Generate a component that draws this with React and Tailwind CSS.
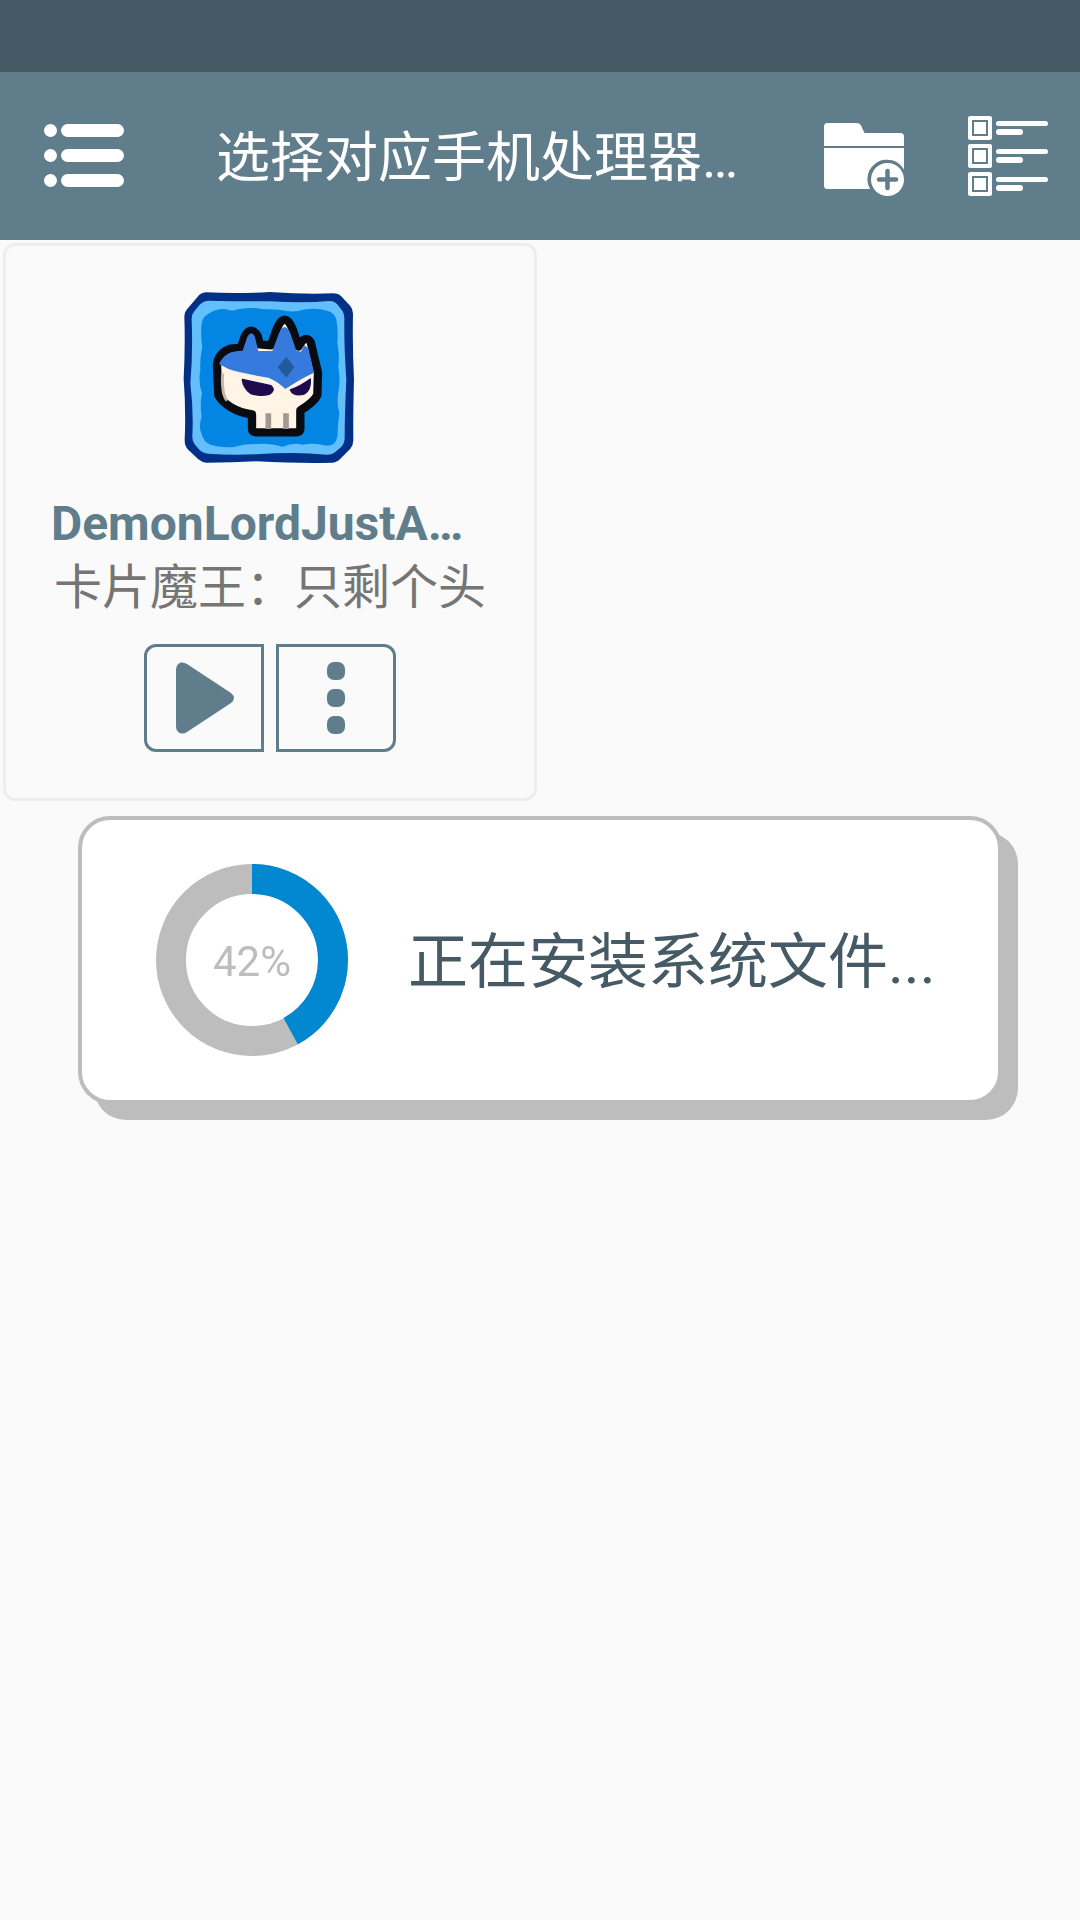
import React from 'react';

const MenuIcon = () => (
  <svg viewBox="0 0 80 80" className="w-20 h-20" fill="currentColor">
    {[8, 33, 58].map((y) => (
      <g key={y}>
        <rect x="0" y={y} width="13" height="13" rx="6.5" />
        <rect x="17" y={y} width="63" height="13" rx="6.5" />
      </g>
    ))}
  </svg>
);

const AddFolderIcon = () => (
  <svg viewBox="0 0 80 80" className="w-20 h-20">
    <path
      fill="currentColor"
      d="M0 30V10.500Q0 7 3.500 7H33Q36 7 37 9.500L40.500 17H76.500Q80 17 80 20.500V30Z"
    />
    <path
      fill="currentColor"
      d="M0 32H80V53.500A19 19 0 0 0 46 73H3.500Q0 73 0 69.500Z"
    />
    <circle cx="63.500" cy="63.500" r="16.500" fill="currentColor" />
    <path
      d="M63.500 55v17M55 63.500h17"
      fill="none"
      stroke="#607d8b"
      strokeWidth="4.500"
      strokeLinecap="round"
    />
  </svg>
);

const ViewListIcon = () => (
  <svg viewBox="0 0 80 80" className="w-20 h-20" fill="currentColor">
    {[0, 28, 56].map((y) => (
      <g key={y}>
        <rect x="0" y={y} width="24" height="24" rx="2" />
        <rect x="5" y={y + 5} width="14" height="14" fill="none" stroke="#607d8b" strokeWidth="2" />
        <rect x="28" y={y + 5} width="52" height="5" rx="2.500" />
        <rect x="28" y={y + 13} width="27" height="6" rx="3" />
      </g>
    ))}
  </svg>
);

const PlayIcon = () => (
  <svg viewBox="0 0 80 80" className="w-20 h-20" fill="currentColor">
    <path d="M12 12Q12 6 17 4.500Q20 4 23 6L67 35Q73 40 67 45L23 74Q20 76 17 75.500Q12 74 12 68Z" />
  </svg>
);

const DotsIcon = () => (
  <svg viewBox="0 0 80 80" className="w-20 h-20" fill="currentColor">
    <rect x="31" y="4" width="18" height="18" rx="7" />
    <rect x="31" y="31" width="18" height="18" rx="7" />
    <rect x="31" y="58" width="18" height="18" rx="7" />
  </svg>
);

// Skull with the blue crown
const AppLogo = () => (
  <svg viewBox="40 33 522 522" className="w-[174px] h-[174px]">
    <path
      fill="#033087"
      d="M108 37Q200 42 300 36Q400 43 490 40Q505 40 516 50L542 78Q551 88 550 105Q548 200 553 300Q550 400 551 480Q551 495 542 506L512 536Q502 547 486 548Q400 551 260 544Q190 548 110 548Q96 547 86 538L54 508Q45 498 45 480Q49 390 42 296Q47 200 44 110Q44 98 52 88L84 50Q94 38 108 37Z"
    />
    <path
      fill="#62bffb"
      d="M115 62Q200 64 300 64Q400 70 480 63Q495 64 504 74L518 92Q525 102 524 120Q523 200 530 300Q525 400 525 475Q524 492 514 502L494 518Q484 525 470 524Q380 515 260 523Q180 526 115 521Q100 520 90 510L76 494Q67 484 68 468Q72 390 62 310Q70 220 66 120Q65 104 74 94L90 74Q100 63 115 62Z"
    />
    <path
      fill="#0386e3"
      d="M122 98Q145 84 170 88Q185 95 205 88Q250 80 280 88Q330 87 350 93Q380 97 400 89Q440 82 472 92Q495 98 500 118Q506 150 503 190Q510 225 506 260Q513 300 506 335Q500 370 509 400Q504 440 503 470Q498 497 470 497Q435 488 400 494Q370 486 340 500Q300 488 260 492Q220 492 190 502Q150 502 124 495Q102 488 95 460Q86 440 96 410Q90 375 97 340Q85 305 92 270Q90 235 98 200Q92 165 96 130Q100 106 122 98Z"
    />
    <path
      fill="#fff4e6"
      stroke="#0a0b10"
      strokeWidth="25"
      strokeLinejoin="round"
      d="M142 255C145 230 160 212 182 206L213 203L226 168Q244 136 264 168L270 193L304 196L320 150Q345 88 370 150L386 200L398 182Q412 170 423 186L445 278L443 345Q434 366 392 391V448Q390 457 380 457H258Q247 457 247 446V403C200 397 160 372 146 345Z"
    />
    <path
      fill="#367ade"
      d="M148 252C162 222 185 212 219 212L233 170Q244 150 255 168L266 213H308L328 160Q345 122 362 160L380 212L394 215L404 196L416 205L433 278Q395 295 347 327Q325 305 296 293Q225 282 178 268Z"
    />
    <path fill="#235a9c" d="M350 230L374 262L350 293L324 262Z" />
    <path
      fill="#1d0b4c"
      stroke="#1d0b4c"
      strokeWidth="4"
      strokeLinejoin="round"
      d="M218 298L304 317Q320 330 298 343Q270 350 242 340Q220 322 218 298Z"
    />
    <path
      fill="#1d0b4c"
      stroke="#1d0b4c"
      strokeWidth="4"
      strokeLinejoin="round"
      d="M422 297Q424 338 396 344Q370 347 362 330Q390 320 422 297Z"
    />
    <path fill="none" stroke="#c9b6ab" strokeWidth="9" d="M159 280Q155 340 172 362" />
    <path fill="none" stroke="#a39892" strokeWidth="17" d="M296 400V447M349 400V447" />
  </svg>
);

const ProgressRing = ({ percent }) => {
  const length = 2 * Math.PI * 81;

  return (
    <div
      className="relative shrink-0"
      role="progressbar"
      aria-valuenow={percent}
    >
      <svg viewBox="0 0 192 192" className="w-48 h-48 -rotate-90" fill="none" strokeWidth="30">
        <circle cx="96" cy="96" r="81" stroke="#bdbdbd" />
        <circle
          cx="96"
          cy="96"
          r="81"
          stroke="#0288d1"
          strokeDasharray={`${(length * percent) / 100} ${length}`}
        />
      </svg>
      <span className="absolute inset-0 pt-0.5 flex items-center justify-center text-[42px] text-[#bdbdbd]">
        {percent}%
      </span>
    </div>
  );
};

const AppCard = ({ name, title }) => (
  <div className="border-3 border-[#eeeeee] rounded-xl px-[45px] pt-[45px] pb-[46px] flex flex-col items-center">
    <AppLogo />
    <h2 className="w-full mt-[31px] text-5xl leading-[56px] font-bold text-[#607d8b] truncate">{name}</h2>
    <p className="text-5xl leading-[72px] text-[#757575] whitespace-nowrap">{title}</p>
    <div className="flex gap-3 mt-5 text-[#607d8b]">
      <button
        type="button"
        aria-label="Play"
        className="w-[120px] h-[108px] flex items-center justify-center border-3 border-[#607d8b] rounded-l-xl"
      >
        <PlayIcon />
      </button>
      <button
        type="button"
        aria-label="More"
        className="w-[120px] h-[108px] flex items-center justify-center border-3 border-[#607d8b] rounded-r-xl"
      >
        <DotsIcon />
      </button>
    </div>
  </div>
);

const App = () => {
  return (
    <div className="min-h-screen bg-[#fafafa] font-['Roboto','Noto_Sans_CJK_SC',sans-serif]">
      {/* Status bar */}
      <div className="h-18 bg-[#455a64]" />

      {/* Toolbar */}
      <header className="h-42 bg-[#607d8b] text-white flex items-center pl-11 pr-8">
        <button type="button" aria-label="Menu">
          <MenuIcon />
        </button>
        <h1 className="flex-1 ml-[92px] pt-1.5 text-[54px] leading-[64px] truncate">选择对应手机处理器…</h1>
        <button type="button" aria-label="Add folder">
          <AddFolderIcon />
        </button>
        <button type="button" aria-label="Change view" className="ml-16">
          <ViewListIcon />
        </button>
      </header>

      {/* App grid */}
      <main className="grid grid-cols-2 gap-[6px] p-[3px]">
        <AppCard name="DemonLordJustA…" title="卡片魔王：只剩个头" />
      </main>

      {/* Install dialog */}
      <div className="fixed inset-0 flex items-center px-[78px]">
        <div
          role="dialog"
          aria-label="正在安装系统文件"
          className="w-full flex items-center gap-15 px-[74px] py-11 bg-white border-4 border-[#bdbdbd] rounded-[32px] shadow-[16px_16px_0_#bdbdbd]"
        >
          <ProgressRing percent={42} />
          <p className="pt-1.5 text-6xl text-[#455a64] whitespace-nowrap">正在安装系统文件...</p>
        </div>
      </div>
    </div>
  );
};

export default App;
